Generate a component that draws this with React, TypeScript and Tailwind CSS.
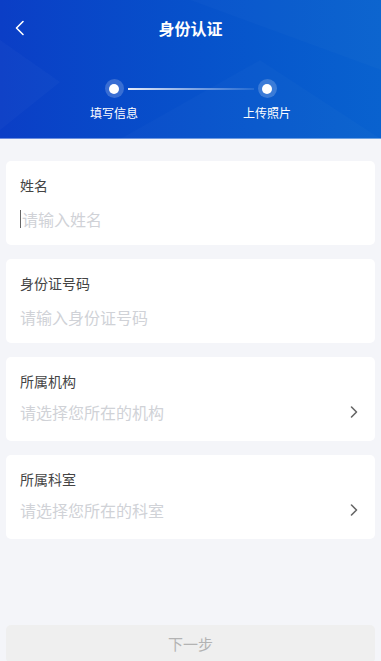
import React from "react";

const font = { fontFamily: '"Noto Sans CJK SC", "Noto Sans", sans-serif' };

function Chevron() {
  return (
    <svg width="10" height="14" viewBox="0 0 10 14" fill="none">
      <path d="M2.5 2 L7.5 7 L2.5 12" stroke="#666" strokeWidth="1.6" strokeLinecap="round" strokeLinejoin="round" />
    </svg>
  );
}

function Field({ label, placeholder, select, cursor }: { label: string; placeholder: string; select?: boolean; cursor?: boolean }) {
  return (
    <div className={`bg-white rounded-[5px] pl-[14px] pr-[16px] pt-[14px] ${select ? "pb-[19px]" : "pb-[16px]"}`}>
      <div className="text-[14px] leading-[20px] text-[#444]">{label}</div>
      <div className={`${select ? "mt-[11px]" : "mt-[14px]"} flex items-center justify-between`}>
        <div className="flex items-center text-[16px] leading-[20px] text-[#d0d2d7]">
          {cursor && <span className="w-px h-[18px] bg-[#666] mr-[1px]" />}
          {placeholder}
        </div>
        {select && <Chevron />}
      </div>
    </div>
  );
}

export default function App() {
  return (
    <div className="h-[661px] w-[381px] overflow-hidden flex flex-col bg-[#f4f5f9]" style={font}>
      <div className="relative h-[139px] bg-gradient-to-r from-[#0b3ec6] to-[#0962cf] overflow-hidden">
        <svg className="absolute inset-0" width="381" height="139" viewBox="0 0 381 139">
          <polygon points="0,40 60,82 0,130" fill="#ffffff" opacity="0.025" />
          <polygon points="190,0 381,0 381,70" fill="#ffffff" opacity="0.02" />
          <polygon points="120,139 260,60 381,139" fill="#ffffff" opacity="0.02" />
        </svg>
        <div className="relative flex items-center h-[56px]">
          <div className="absolute left-[14px] top-[20px]">
            <svg width="12" height="16" viewBox="0 0 12 16" fill="none">
              <path d="M9 1.5 L2.5 8 L9 14.5" stroke="#fff" strokeWidth="1.6" strokeLinecap="round" strokeLinejoin="round" />
            </svg>
          </div>
          <div className="w-full text-center text-white font-bold text-[16px] leading-[22px]">身份认证</div>
        </div>
        <div className="relative flex justify-between px-[84px] mt-[23px]">
          <div className="flex flex-col items-center w-[60px]">
            <div className="w-[19px] h-[19px] rounded-full bg-white/20 flex items-center justify-center">
              <div className="w-[10px] h-[10px] rounded-full bg-white" />
            </div>
            <div className="mt-[7px] text-white text-[12px] leading-[16px]">填写信息</div>
          </div>
          <div className="absolute left-[128px] top-[9px] w-[126px] h-[1.5px] bg-gradient-to-r from-white/90 to-white/10" />
          <div className="flex flex-col items-center w-[60px]">
            <div className="w-[19px] h-[19px] rounded-full bg-white/20 flex items-center justify-center">
              <div className="w-[10px] h-[10px] rounded-full bg-white" />
            </div>
            <div className="mt-[7px] text-white text-[12px] leading-[16px]">上传照片</div>
          </div>
        </div>
        <div className="absolute bottom-0 left-0 right-0 h-px bg-white/40" />
      </div>
      <div className="px-[6px] pt-[22px] flex flex-col gap-[14px]">
        <Field label="姓名" placeholder="请输入姓名" cursor />
        <Field label="身份证号码" placeholder="请输入身份证号码" />
        <Field label="所属机构" placeholder="请选择您所在的机构" select />
        <Field label="所属科室" placeholder="请选择您所在的科室" select />
      </div>
      <div className="mt-auto px-[6px] mb-[-2px]">
        <div className="h-[38px] rounded-[5px] bg-[#efefef] flex items-center justify-center text-[15px] text-[#b3b3b3]">下一步</div>
      </div>
    </div>
  );
}
